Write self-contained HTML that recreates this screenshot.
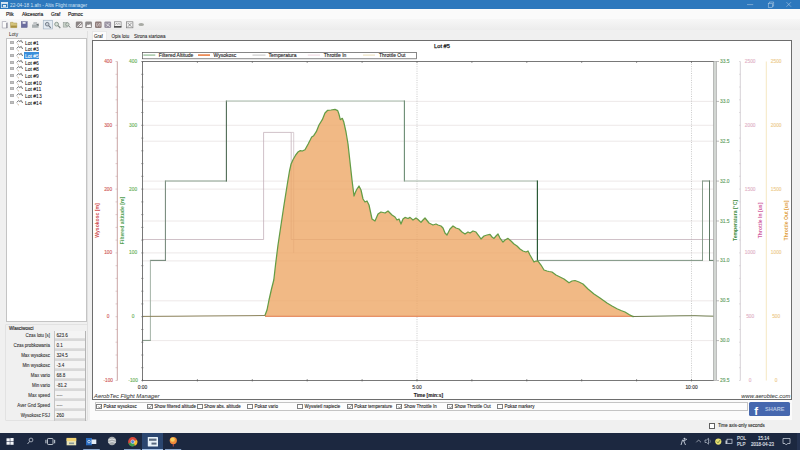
<!DOCTYPE html>
<html><head><meta charset="utf-8"><style>
*{box-sizing:border-box}
html,body{margin:0;padding:0;width:800px;height:450px;overflow:hidden;background:#f0f0f0;font-family:"Liberation Sans",sans-serif;position:relative}
.abs{position:absolute}
.title{position:absolute;left:0;top:0;width:800px;height:9.3px;background:#2d78bd}
.ttext{position:absolute;left:10px;top:2.6px;font-size:4.78px;line-height:5px;color:#d4e4f4;white-space:nowrap}
.menu{position:absolute;left:0;top:9px;width:800px;height:10px;background:#fbfbfb}
.mi{position:absolute;top:12px;font-size:4.8px;line-height:5px;color:#222;white-space:nowrap;-webkit-text-stroke:0.15px #222}
.toolbar{position:absolute;left:0;top:19px;width:800px;height:11px;background:linear-gradient(#f7f7f7,#ececec)}
.tool{position:absolute;top:21.5px;width:6.5px;height:6.5px;border:0.6px solid #888;border-radius:0.8px}
.tree{position:absolute;left:6px;top:38px;width:80.5px;height:283.5px;background:#fff;border:0.6px solid #c4c4c4}
.tsq{position:absolute;left:10px;width:3.6px;height:3px;background:#c0c0c0;border:0.4px solid #b0b0b0}
.ticon{position:absolute;left:16px}
.titem{position:absolute;left:25px;font-size:5px;line-height:6.6px;white-space:nowrap;-webkit-text-stroke:0.05px currentColor}
.tsel{position:absolute;left:24px;width:15.2px;height:7px;background:#3a8fdc}
.grp{position:absolute;left:5px;top:323.5px;width:82.5px;height:97.5px;border:0.5px solid #e2e2e2;border-radius:1px}
.plab{position:absolute;right:750px;font-size:4.45px;line-height:6px;color:#333;white-space:nowrap;text-align:right;-webkit-text-stroke:0.08px #333}
.pbox{position:absolute;left:54px;width:31.6px;height:10px;background:linear-gradient(#f4f4f4 0,#f4f4f4 72%,#d8d8d8 76%,#d8d8d8 100%);border-left:0.6px solid #c4c4c4;border-right:0.7px solid #b4b4b4;font-size:4.6px;line-height:10px;padding-left:1.4px;color:#222;white-space:nowrap;-webkit-text-stroke:0.06px #222}
.tabs{position:absolute;left:91.5px;top:31px;width:15px;height:9.5px;background:#fcfcfc;border:0.5px solid #e8e8e8;border-bottom:none}
.tab{position:absolute;top:34px;font-size:4.5px;line-height:5px;color:#222;white-space:nowrap;-webkit-text-stroke:0.06px #222}
.chkrow{position:absolute;left:95px;top:402.3px;width:653px;height:8.3px;background:#fdfdfd;border:0.6px solid #c4c4c4}
.cb{position:absolute;width:6px;height:5.3px;border:0.5px solid #808080;background:#fff}
.cbl{position:absolute;font-size:4.5px;line-height:6px;color:#222;white-space:nowrap;-webkit-text-stroke:0.08px #222}
.fb{position:absolute;left:749px;top:402.3px;width:41.3px;height:14px;background:#4567ae;border-radius:1.6px}
.task{position:absolute;left:0;top:433px;width:800px;height:17px;background:#1c2840}
.tray{position:absolute;font-size:4.5px;line-height:5px;color:#e4e8f0;white-space:nowrap;-webkit-text-stroke:0.1px #e4e8f0}
</style></head><body>
<div class="title"></div>
<svg class="abs" style="left:1px;top:1.5px" width="7" height="6" viewBox="0 0 7 6"><rect x="0.3" y="0.3" width="6.4" height="5.4" fill="none" stroke="#e8f0f8" stroke-width="0.7"/><rect x="0.3" y="0.3" width="6.4" height="1.6" fill="#e8f0f8"/><rect x="2" y="3" width="3" height="1.8" fill="#e8f0f8"/></svg>
<div class="ttext">22-04-18 1.afn - Altis Flight manager</div>
<svg class="abs" style="left:740px;top:0" width="60" height="9" viewBox="740 0 60 9"><path d="M747 4.6 L753.2 4.6" stroke="#d4e2f0" stroke-width="0.45"/><rect x="768.2" y="3.2" width="4.2" height="4.2" fill="none" stroke="#d4e2f0" stroke-width="0.45"/><path d="M769.4 3.2 L769.4 2 L773.6 2 L773.6 6.2 L772.4 6.2" fill="none" stroke="#d4e2f0" stroke-width="0.45"/><path d="M786.5 2.2 L791 6.7 M791 2.2 L786.5 6.7" stroke="#d4e2f0" stroke-width="0.45"/></svg>


<div class="menu"></div>
<div class="mi" style="left:6px">Plik</div>
<div class="mi" style="left:22px">Akcesoria</div>
<div class="mi" style="left:51px">Graf</div>
<div class="mi" style="left:68px">Pomoc</div>
<div class="toolbar"></div>
<svg class="abs" style="left:0;top:18px" width="150" height="13" viewBox="0 18 150 13">
<path d="M2.3 21.5 L6 21.5 L7.2 22.7 L7.2 28 L2.3 28 Z" fill="#fafafa" stroke="#9a9aa8" stroke-width="0.6"/><path d="M6.8 23 L6.8 28" stroke="#6a6a78" stroke-width="0.8"/>
<path d="M10.5 22.3 L13 22.3 L13.6 23 L16.8 23 L16.8 27.6 L10.5 27.6 Z" fill="#d4c47c" stroke="#a89448" stroke-width="0.5"/><rect x="11" y="25.6" width="5.8" height="2" fill="#a89040"/>
<rect x="21.2" y="21.6" width="6" height="6" fill="#6a6c9e" stroke="#5a5c8a" stroke-width="0.4"/><rect x="22.6" y="22" width="3" height="1.8" fill="#e8e8f0"/>
<path d="M32 24.5 L38.6 24.5 L38.6 27.8 L32 27.8 Z" fill="#aab0b2"/><path d="M33.5 22 L37 22 L37.5 24.5 L33 24.5 Z" fill="#c0c4c6"/><path d="M36 24.5 L38.6 23.6 L38.6 26" fill="#6a7274"/>
<rect x="43.3" y="20.3" width="9.2" height="8.6" fill="#e4ebf2" stroke="#a4b4c4" stroke-width="0.7"/>
<circle cx="47.2" cy="24.2" r="1.8" fill="#c8d0d8" stroke="#606a78" stroke-width="0.8"/><path d="M48.5 25.5 L50.8 27.8" stroke="#707880" stroke-width="1.1"/>
<circle cx="56.6" cy="24.2" r="1.9" fill="#d8e0d8" stroke="#7a8a80" stroke-width="0.8"/><path d="M58 25.6 L60.3 28" stroke="#7a8480" stroke-width="1.1"/>
<rect x="63.2" y="22.5" width="4" height="4.6" fill="#c8d0c8" stroke="#8a9490" stroke-width="0.5"/><circle cx="67.4" cy="24.4" r="1.7" fill="#d0d8d0" stroke="#7a8a80" stroke-width="0.7"/><path d="M68.6 25.6 L70.2 27.6" stroke="#7a8480" stroke-width="1"/>
<rect x="75.8" y="21.6" width="6.8" height="6.3" rx="1.2" fill="#8a8484"/><path d="M77.2 26.6 L81.2 22.8" stroke="#faf6f6" stroke-width="0.9"/><path d="M78.6 27 L81.8 24 L81.8 27 Z" fill="#faf6f6"/>
<rect x="85.2" y="21.6" width="6.8" height="6.3" rx="1.2" fill="#8e8a8a"/><path d="M86.2 27 L87.8 24.2 L89 25.2 L90.2 23.4 L91.2 27 Z" fill="#faf8f8"/>
<rect x="95" y="21.6" width="6.6" height="6.3" rx="1.2" fill="#8e7c7a"/><path d="M97 23 Q96.3 24.8 97 26.6 M99.8 23 Q100.5 24.8 99.8 26.6 M99.4 23.2 L97.6 26.4" stroke="#f4eaea" stroke-width="0.6" fill="none"/>
<rect x="104.3" y="21.6" width="6.8" height="6.3" rx="1.2" fill="#9a94a2"/><path d="M106 23.5 L107.5 25 L109.5 23 M106.5 26.5 L108 25 L110 26.8" stroke="#f4f2f6" stroke-width="0.7" fill="none"/>
<rect x="114.3" y="21.8" width="6.8" height="5.8" fill="#f4f4f4" stroke="#6a6a6a" stroke-width="0.6"/><rect x="114" y="26" width="7.4" height="1.4" fill="#505050"/><path d="M115.5 24.8 L116.6 23.2 L117.8 24.6 L119 23.2 L120 24.8" stroke="#6a6a6a" stroke-width="0.5" fill="none"/>
<rect x="126.4" y="21.8" width="6.5" height="6" fill="#f0f0f0" stroke="#7a7a7a" stroke-width="0.7"/><path d="M127.8 23 L131.5 26.8 M131.5 23 L127.8 26.8" stroke="#5a5a5a" stroke-width="0.6"/>
<ellipse cx="141.2" cy="24.5" rx="2.8" ry="1.6" fill="#a8aaa4"/>
</svg>
<div class="abs" style="left:9px;top:31.5px;font-size:4.8px;line-height:5px;color:#222">Loty</div>
<div class="tree"></div>
<div class="tsq" style="top:40.80px"></div><svg class="ticon" style="top:38.60px" width="8" height="8" viewBox="0 0 8 8"><path d="M0.8 3.4 L2.6 1.6 L3.8 2.6 L5.2 1.4 L6.6 4" fill="none" stroke="#3a3a3a" stroke-width="0.75"/><path d="M1.2 4 Q1.6 5.8 3 6.8" fill="none" stroke="#9a9a9a" stroke-width="0.5" stroke-dasharray="0.8,0.5"/><circle cx="2.4" cy="5.4" r="0.4" fill="#d8a050"/></svg><div class="titem" style="top:39.50px;color:#111">Lot #1</div><div class="tsq" style="top:47.47px"></div><svg class="ticon" style="top:45.27px" width="8" height="8" viewBox="0 0 8 8"><path d="M0.8 3.4 L2.6 1.6 L3.8 2.6 L5.2 1.4 L6.6 4" fill="none" stroke="#3a3a3a" stroke-width="0.75"/><path d="M1.2 4 Q1.6 5.8 3 6.8" fill="none" stroke="#9a9a9a" stroke-width="0.5" stroke-dasharray="0.8,0.5"/><circle cx="2.4" cy="5.4" r="0.4" fill="#d8a050"/></svg><div class="titem" style="top:46.17px;color:#111">Lot #3</div><div class="tsq" style="top:54.13px"></div><svg class="ticon" style="top:51.93px" width="8" height="8" viewBox="0 0 8 8"><path d="M0.8 3.4 L2.6 1.6 L3.8 2.6 L5.2 1.4 L6.6 4" fill="none" stroke="#3a3a3a" stroke-width="0.75"/><path d="M1.2 4 Q1.6 5.8 3 6.8" fill="none" stroke="#9a9a9a" stroke-width="0.5" stroke-dasharray="0.8,0.5"/><circle cx="2.4" cy="5.4" r="0.4" fill="#d8a050"/></svg><div class="tsel" style="top:51.93px"></div><div class="titem" style="top:52.83px;color:#fff">Lot #5</div><div class="tsq" style="top:60.80px"></div><svg class="ticon" style="top:58.60px" width="8" height="8" viewBox="0 0 8 8"><path d="M0.8 3.4 L2.6 1.6 L3.8 2.6 L5.2 1.4 L6.6 4" fill="none" stroke="#3a3a3a" stroke-width="0.75"/><path d="M1.2 4 Q1.6 5.8 3 6.8" fill="none" stroke="#9a9a9a" stroke-width="0.5" stroke-dasharray="0.8,0.5"/><circle cx="2.4" cy="5.4" r="0.4" fill="#d8a050"/></svg><div class="titem" style="top:59.50px;color:#111">Lot #6</div><div class="tsq" style="top:67.47px"></div><svg class="ticon" style="top:65.27px" width="8" height="8" viewBox="0 0 8 8"><path d="M0.8 3.4 L2.6 1.6 L3.8 2.6 L5.2 1.4 L6.6 4" fill="none" stroke="#3a3a3a" stroke-width="0.75"/><path d="M1.2 4 Q1.6 5.8 3 6.8" fill="none" stroke="#9a9a9a" stroke-width="0.5" stroke-dasharray="0.8,0.5"/><circle cx="2.4" cy="5.4" r="0.4" fill="#d8a050"/></svg><div class="titem" style="top:66.17px;color:#111">Lot #8</div><div class="tsq" style="top:74.14px"></div><svg class="ticon" style="top:71.94px" width="8" height="8" viewBox="0 0 8 8"><path d="M0.8 3.4 L2.6 1.6 L3.8 2.6 L5.2 1.4 L6.6 4" fill="none" stroke="#3a3a3a" stroke-width="0.75"/><path d="M1.2 4 Q1.6 5.8 3 6.8" fill="none" stroke="#9a9a9a" stroke-width="0.5" stroke-dasharray="0.8,0.5"/><circle cx="2.4" cy="5.4" r="0.4" fill="#d8a050"/></svg><div class="titem" style="top:72.84px;color:#111">Lot #9</div><div class="tsq" style="top:80.80px"></div><svg class="ticon" style="top:78.60px" width="8" height="8" viewBox="0 0 8 8"><path d="M0.8 3.4 L2.6 1.6 L3.8 2.6 L5.2 1.4 L6.6 4" fill="none" stroke="#3a3a3a" stroke-width="0.75"/><path d="M1.2 4 Q1.6 5.8 3 6.8" fill="none" stroke="#9a9a9a" stroke-width="0.5" stroke-dasharray="0.8,0.5"/><circle cx="2.4" cy="5.4" r="0.4" fill="#d8a050"/></svg><div class="titem" style="top:79.50px;color:#111">Lot #10</div><div class="tsq" style="top:87.47px"></div><svg class="ticon" style="top:85.27px" width="8" height="8" viewBox="0 0 8 8"><path d="M0.8 3.4 L2.6 1.6 L3.8 2.6 L5.2 1.4 L6.6 4" fill="none" stroke="#3a3a3a" stroke-width="0.75"/><path d="M1.2 4 Q1.6 5.8 3 6.8" fill="none" stroke="#9a9a9a" stroke-width="0.5" stroke-dasharray="0.8,0.5"/><circle cx="2.4" cy="5.4" r="0.4" fill="#d8a050"/></svg><div class="titem" style="top:86.17px;color:#111">Lot #11</div><div class="tsq" style="top:94.14px"></div><svg class="ticon" style="top:91.94px" width="8" height="8" viewBox="0 0 8 8"><path d="M0.8 3.4 L2.6 1.6 L3.8 2.6 L5.2 1.4 L6.6 4" fill="none" stroke="#3a3a3a" stroke-width="0.75"/><path d="M1.2 4 Q1.6 5.8 3 6.8" fill="none" stroke="#9a9a9a" stroke-width="0.5" stroke-dasharray="0.8,0.5"/><circle cx="2.4" cy="5.4" r="0.4" fill="#d8a050"/></svg><div class="titem" style="top:92.84px;color:#111">Lot #13</div><div class="tsq" style="top:100.80px"></div><svg class="ticon" style="top:98.60px" width="8" height="8" viewBox="0 0 8 8"><path d="M0.8 3.4 L2.6 1.6 L3.8 2.6 L5.2 1.4 L6.6 4" fill="none" stroke="#3a3a3a" stroke-width="0.75"/><path d="M1.2 4 Q1.6 5.8 3 6.8" fill="none" stroke="#9a9a9a" stroke-width="0.5" stroke-dasharray="0.8,0.5"/><circle cx="2.4" cy="5.4" r="0.4" fill="#d8a050"/></svg><div class="titem" style="top:99.50px;color:#111">Lot #14</div>
<div class="grp"></div>
<div class="abs" style="left:9px;top:325.6px;font-size:4.5px;line-height:5px;color:#222;-webkit-text-stroke:0.12px #222">Wlasciwosci</div>
<div class="plab" style="top:332.6px">Czas lotu [s]</div><div class="pbox" style="top:330.5px">623.6</div><div class="plab" style="top:342.6px">Czas probkowania</div><div class="pbox" style="top:340.5px">0.1</div><div class="plab" style="top:352.6px">Max wysokosc</div><div class="pbox" style="top:350.5px">324.5</div><div class="plab" style="top:362.6px">Min wysokosc</div><div class="pbox" style="top:360.5px">-3.4</div><div class="plab" style="top:372.6px">Max vario</div><div class="pbox" style="top:370.5px">68.8</div><div class="plab" style="top:382.6px">Min vario</div><div class="pbox" style="top:380.5px">-81.2</div><div class="plab" style="top:392.6px">Max speed</div><div class="pbox" style="top:390.5px">----</div><div class="plab" style="top:402.6px">Aver Gnd Speed</div><div class="pbox" style="top:400.5px">----</div><div class="plab" style="top:412.6px">Wysokosc FSJ</div><div class="pbox" style="top:410.5px">260</div>
<div class="abs" style="left:87px;top:31px;width:1px;height:370px;background:#e0e0e0"></div>
<div class="tabs"></div>
<div class="tab" style="left:94px;top:33.6px">Graf</div>
<div class="tab" style="left:111.5px">Opis lotu</div>
<div class="tab" style="left:134px">Strona startowa</div>
<svg width="800" height="450" viewBox="0 0 800 450" style="position:absolute;left:0;top:0" font-family="Liberation Sans, sans-serif"><rect x="92.5" y="40.5" width="699" height="359" fill="#fff" stroke="#6d6d6d" stroke-width="1"/><line x1="142.5" y1="125.3" x2="714.0" y2="125.3" stroke="#e8e2e2" stroke-width="0.8"/><line x1="142.5" y1="189.1" x2="714.0" y2="189.1" stroke="#e8e2e2" stroke-width="0.8"/><line x1="142.5" y1="252.9" x2="714.0" y2="252.9" stroke="#e8e2e2" stroke-width="0.8"/><line x1="142.5" y1="101.4" x2="714.0" y2="101.4" stroke="#e8e2e2" stroke-width="0.8"/><line x1="142.5" y1="141.2" x2="714.0" y2="141.2" stroke="#e8e2e2" stroke-width="0.8"/><line x1="142.5" y1="181.1" x2="714.0" y2="181.1" stroke="#e8e2e2" stroke-width="0.8"/><line x1="142.5" y1="221.0" x2="714.0" y2="221.0" stroke="#e8e2e2" stroke-width="0.8"/><line x1="142.5" y1="260.9" x2="714.0" y2="260.9" stroke="#e8e2e2" stroke-width="0.8"/><line x1="142.5" y1="300.8" x2="714.0" y2="300.8" stroke="#e8e2e2" stroke-width="0.8"/><line x1="142.5" y1="340.6" x2="714.0" y2="340.6" stroke="#e8e2e2" stroke-width="0.8"/><line x1="417.0" y1="61.5" x2="417.0" y2="380.5" stroke="#a8a8a8" stroke-width="0.6" stroke-dasharray="1,1.3"/><line x1="691.5" y1="61.5" x2="691.5" y2="380.5" stroke="#a8a8a8" stroke-width="0.6" stroke-dasharray="1,1.3"/><polyline points="142.5,239.5 263.6,239.5 263.6,132.4 291.2,132.4 291.2,239.5 714,239.5" fill="none" stroke="#c0acb6" stroke-width="0.75"/><polyline points="291.2,132.4 293.7,132.4 293.7,253" fill="none" stroke="#c8b8c0" stroke-width="0.7"/><line x1="142.5" y1="340.4" x2="150.9" y2="340.4" stroke="#7e9482" stroke-width="1.0"/><line x1="150.4" y1="340.9" x2="150.4" y2="259.9" stroke="#98aa9c" stroke-width="0.9"/><line x1="150.4" y1="260.4" x2="165.9" y2="260.4" stroke="#74887a" stroke-width="1.1"/><line x1="165.4" y1="260.9" x2="165.4" y2="180.5" stroke="#6e8274" stroke-width="1.0"/><line x1="165.4" y1="181" x2="226.9" y2="181" stroke="#8aa290" stroke-width="1.1"/><line x1="226.4" y1="181.5" x2="226.4" y2="100.5" stroke="#4e6a54" stroke-width="1.1"/><line x1="226.4" y1="101" x2="404.9" y2="101" stroke="#a8bcac" stroke-width="1.2"/><line x1="404.4" y1="100.5" x2="404.4" y2="181.5" stroke="#6a8c72" stroke-width="1.1"/><line x1="404.4" y1="181" x2="537.9" y2="181" stroke="#a8bcac" stroke-width="1.2"/><line x1="537.4" y1="180.5" x2="537.4" y2="260.9" stroke="#2a5a36" stroke-width="1.2"/><line x1="537.4" y1="260.4" x2="703" y2="260.4" stroke="#7e9482" stroke-width="1.0"/><line x1="702.5" y1="260.9" x2="702.5" y2="180.5" stroke="#7e9482" stroke-width="0.9"/><line x1="702.5" y1="181" x2="710" y2="181" stroke="#7e9482" stroke-width="1.0"/><line x1="709.5" y1="180.5" x2="709.5" y2="260.9" stroke="#5e7a64" stroke-width="1.0"/><line x1="709.5" y1="260.4" x2="714" y2="260.4" stroke="#5e7a64" stroke-width="1.0"/><polygon points="265,316.3 265.0,315.2 267.0,310.0 269.0,300.0 271.5,289.0 273.8,280.0 275.5,265.0 278.0,245.0 281.0,225.0 284.0,205.0 287.5,183.0 289.5,171.0 291.0,164.3 293.0,159.7 295.7,155.0 298.3,151.7 300.3,150.6 302.3,151.0 305.0,149.7 308.3,143.7 311.7,137.0 313.7,135.7 316.3,131.7 319.0,125.0 322.3,119.7 325.0,113.0 327.7,110.3 331.0,110.0 335.0,109.4 337.7,110.6 339.0,114.3 340.3,119.7 342.3,118.3 343.7,121.7 346.0,132.0 348.0,144.0 350.0,162.0 352.0,180.0 354.0,196.0 355.5,192.0 357.0,189.0 359.0,186.0 361.0,190.0 363.0,199.0 365.0,202.0 367.0,201.0 369.0,205.0 372.0,219.0 375.0,221.0 378.0,214.0 381.0,212.0 385.0,213.0 388.0,211.0 392.0,215.0 395.0,217.0 397.0,220.0 399.0,219.0 401.0,224.0 403.0,219.0 405.0,217.4 408.0,218.5 410.0,217.4 413.0,220.0 416.0,218.0 418.0,219.5 421.0,222.4 423.0,220.0 425.0,218.0 429.0,223.0 433.0,225.0 436.0,224.0 438.0,225.0 441.0,226.0 443.0,228.0 445.0,233.0 447.0,235.0 450.0,229.0 453.0,226.0 456.0,228.0 459.0,229.0 462.0,232.0 465.0,234.0 468.0,232.0 470.0,233.0 473.0,231.0 476.0,232.0 479.0,236.0 481.0,239.0 484.0,236.0 487.0,235.0 490.0,234.4 492.0,237.0 494.0,238.4 496.0,236.0 498.0,234.0 500.0,238.0 503.0,242.0 505.0,240.0 508.0,238.4 511.0,241.0 514.0,244.0 517.0,246.0 520.0,249.0 523.0,251.0 526.0,252.0 528.0,251.0 530.0,255.0 534.0,262.0 536.0,261.0 538.0,261.0 541.0,265.0 544.0,270.0 547.0,271.0 549.0,271.5 552.0,272.0 556.0,275.0 560.0,277.0 564.0,279.0 569.0,282.8 572.0,281.0 575.0,280.5 579.0,282.0 583.0,284.0 588.0,289.0 594.0,294.0 600.0,298.0 607.0,303.0 612.0,306.0 617.0,308.7 621.0,310.5 625.0,312.0 629.0,314.5 633.0,316.6 634.0,316.4 633,316.3" fill="#eea866" fill-opacity="0.8"/><line x1="265" y1="316.3" x2="633" y2="316.3" stroke="#e27a4a" stroke-width="1"/><polyline points="265.0,315.2 267.0,310.0 269.0,300.0 271.5,289.0 273.8,280.0 275.5,265.0 278.0,245.0 281.0,225.0 284.0,205.0 287.5,183.0 289.5,171.0 291.0,164.3 293.0,159.7 295.7,155.0 298.3,151.7 300.3,150.6 302.3,151.0 305.0,149.7 308.3,143.7 311.7,137.0 313.7,135.7 316.3,131.7 319.0,125.0 322.3,119.7 325.0,113.0 327.7,110.3 331.0,110.0 335.0,109.4 337.7,110.6 339.0,114.3 340.3,119.7 342.3,118.3 343.7,121.7 346.0,132.0 348.0,144.0 350.0,162.0 352.0,180.0 354.0,196.0 355.5,192.0 357.0,189.0 359.0,186.0 361.0,190.0 363.0,199.0 365.0,202.0 367.0,201.0 369.0,205.0 372.0,219.0 375.0,221.0 378.0,214.0 381.0,212.0 385.0,213.0 388.0,211.0 392.0,215.0 395.0,217.0 397.0,220.0 399.0,219.0 401.0,224.0 403.0,219.0 405.0,217.4 408.0,218.5 410.0,217.4 413.0,220.0 416.0,218.0 418.0,219.5 421.0,222.4 423.0,220.0 425.0,218.0 429.0,223.0 433.0,225.0 436.0,224.0 438.0,225.0 441.0,226.0 443.0,228.0 445.0,233.0 447.0,235.0 450.0,229.0 453.0,226.0 456.0,228.0 459.0,229.0 462.0,232.0 465.0,234.0 468.0,232.0 470.0,233.0 473.0,231.0 476.0,232.0 479.0,236.0 481.0,239.0 484.0,236.0 487.0,235.0 490.0,234.4 492.0,237.0 494.0,238.4 496.0,236.0 498.0,234.0 500.0,238.0 503.0,242.0 505.0,240.0 508.0,238.4 511.0,241.0 514.0,244.0 517.0,246.0 520.0,249.0 523.0,251.0 526.0,252.0 528.0,251.0 530.0,255.0 534.0,262.0 536.0,261.0 538.0,261.0 541.0,265.0 544.0,270.0 547.0,271.0 549.0,271.5 552.0,272.0 556.0,275.0 560.0,277.0 564.0,279.0 569.0,282.8 572.0,281.0 575.0,280.5 579.0,282.0 583.0,284.0 588.0,289.0 594.0,294.0 600.0,298.0 607.0,303.0 612.0,306.0 617.0,308.7 621.0,310.5 625.0,312.0 629.0,314.5 633.0,316.6 634.0,316.4" fill="none" stroke="#649c45" stroke-width="1.25" stroke-linejoin="round"/><polyline points="142.5,316.4 180,316.2 200,316 230,315.8 250,315.7 265.5,315.5" fill="none" stroke="#8a8058" stroke-width="1"/><polyline points="633,316.5 660,316.1 680,315.8 695,315.7 705,316.0 714,316.2" fill="none" stroke="#6e7a4c" stroke-width="1"/><line x1="142.5" y1="61.5" x2="714.0" y2="61.5" stroke="#555" stroke-width="0.8"/><line x1="142.5" y1="380.5" x2="714.0" y2="380.5" stroke="#555" stroke-width="0.8"/><line x1="142.5" y1="61.5" x2="142.5" y2="380.5" stroke="#555" stroke-width="0.8"/><rect x="713.3" y="61.5" width="3.2" height="319.0" fill="#d2d6d2" stroke="#8a8a8a" stroke-width="0.45"/><line x1="141.0" y1="380.5" x2="143.5" y2="380.5" stroke="#666" stroke-width="0.5"/><line x1="141.0" y1="367.7" x2="143.5" y2="367.7" stroke="#666" stroke-width="0.5"/><line x1="141.0" y1="355.0" x2="143.5" y2="355.0" stroke="#666" stroke-width="0.5"/><line x1="141.0" y1="342.2" x2="143.5" y2="342.2" stroke="#666" stroke-width="0.5"/><line x1="141.0" y1="329.5" x2="143.5" y2="329.5" stroke="#666" stroke-width="0.5"/><line x1="141.0" y1="316.7" x2="143.5" y2="316.7" stroke="#666" stroke-width="0.5"/><line x1="141.0" y1="303.9" x2="143.5" y2="303.9" stroke="#666" stroke-width="0.5"/><line x1="141.0" y1="291.2" x2="143.5" y2="291.2" stroke="#666" stroke-width="0.5"/><line x1="141.0" y1="278.4" x2="143.5" y2="278.4" stroke="#666" stroke-width="0.5"/><line x1="141.0" y1="265.7" x2="143.5" y2="265.7" stroke="#666" stroke-width="0.5"/><line x1="141.0" y1="252.9" x2="143.5" y2="252.9" stroke="#666" stroke-width="0.5"/><line x1="141.0" y1="240.1" x2="143.5" y2="240.1" stroke="#666" stroke-width="0.5"/><line x1="141.0" y1="227.4" x2="143.5" y2="227.4" stroke="#666" stroke-width="0.5"/><line x1="141.0" y1="214.6" x2="143.5" y2="214.6" stroke="#666" stroke-width="0.5"/><line x1="141.0" y1="201.9" x2="143.5" y2="201.9" stroke="#666" stroke-width="0.5"/><line x1="141.0" y1="189.1" x2="143.5" y2="189.1" stroke="#666" stroke-width="0.5"/><line x1="141.0" y1="176.3" x2="143.5" y2="176.3" stroke="#666" stroke-width="0.5"/><line x1="141.0" y1="163.6" x2="143.5" y2="163.6" stroke="#666" stroke-width="0.5"/><line x1="141.0" y1="150.8" x2="143.5" y2="150.8" stroke="#666" stroke-width="0.5"/><line x1="141.0" y1="138.1" x2="143.5" y2="138.1" stroke="#666" stroke-width="0.5"/><line x1="141.0" y1="125.3" x2="143.5" y2="125.3" stroke="#666" stroke-width="0.5"/><line x1="141.0" y1="112.5" x2="143.5" y2="112.5" stroke="#666" stroke-width="0.5"/><line x1="141.0" y1="99.8" x2="143.5" y2="99.8" stroke="#666" stroke-width="0.5"/><line x1="141.0" y1="87.0" x2="143.5" y2="87.0" stroke="#666" stroke-width="0.5"/><line x1="141.0" y1="74.3" x2="143.5" y2="74.3" stroke="#666" stroke-width="0.5"/><line x1="141.0" y1="61.5" x2="143.5" y2="61.5" stroke="#666" stroke-width="0.5"/><line x1="117.3" y1="61.5" x2="117.3" y2="380.5" stroke="#c49a9a" stroke-width="0.9"/><line x1="115.5" y1="380.5" x2="117.3" y2="380.5" stroke="#c49a9a" stroke-width="0.5"/><line x1="115.5" y1="367.7" x2="117.3" y2="367.7" stroke="#c49a9a" stroke-width="0.5"/><line x1="115.5" y1="355.0" x2="117.3" y2="355.0" stroke="#c49a9a" stroke-width="0.5"/><line x1="115.5" y1="342.2" x2="117.3" y2="342.2" stroke="#c49a9a" stroke-width="0.5"/><line x1="115.5" y1="329.5" x2="117.3" y2="329.5" stroke="#c49a9a" stroke-width="0.5"/><line x1="115.5" y1="316.7" x2="117.3" y2="316.7" stroke="#c49a9a" stroke-width="0.5"/><line x1="115.5" y1="303.9" x2="117.3" y2="303.9" stroke="#c49a9a" stroke-width="0.5"/><line x1="115.5" y1="291.2" x2="117.3" y2="291.2" stroke="#c49a9a" stroke-width="0.5"/><line x1="115.5" y1="278.4" x2="117.3" y2="278.4" stroke="#c49a9a" stroke-width="0.5"/><line x1="115.5" y1="265.7" x2="117.3" y2="265.7" stroke="#c49a9a" stroke-width="0.5"/><line x1="115.5" y1="252.9" x2="117.3" y2="252.9" stroke="#c49a9a" stroke-width="0.5"/><line x1="115.5" y1="240.1" x2="117.3" y2="240.1" stroke="#c49a9a" stroke-width="0.5"/><line x1="115.5" y1="227.4" x2="117.3" y2="227.4" stroke="#c49a9a" stroke-width="0.5"/><line x1="115.5" y1="214.6" x2="117.3" y2="214.6" stroke="#c49a9a" stroke-width="0.5"/><line x1="115.5" y1="201.9" x2="117.3" y2="201.9" stroke="#c49a9a" stroke-width="0.5"/><line x1="115.5" y1="189.1" x2="117.3" y2="189.1" stroke="#c49a9a" stroke-width="0.5"/><line x1="115.5" y1="176.3" x2="117.3" y2="176.3" stroke="#c49a9a" stroke-width="0.5"/><line x1="115.5" y1="163.6" x2="117.3" y2="163.6" stroke="#c49a9a" stroke-width="0.5"/><line x1="115.5" y1="150.8" x2="117.3" y2="150.8" stroke="#c49a9a" stroke-width="0.5"/><line x1="115.5" y1="138.1" x2="117.3" y2="138.1" stroke="#c49a9a" stroke-width="0.5"/><line x1="115.5" y1="125.3" x2="117.3" y2="125.3" stroke="#c49a9a" stroke-width="0.5"/><line x1="115.5" y1="112.5" x2="117.3" y2="112.5" stroke="#c49a9a" stroke-width="0.5"/><line x1="115.5" y1="99.8" x2="117.3" y2="99.8" stroke="#c49a9a" stroke-width="0.5"/><line x1="115.5" y1="87.0" x2="117.3" y2="87.0" stroke="#c49a9a" stroke-width="0.5"/><line x1="115.5" y1="74.3" x2="117.3" y2="74.3" stroke="#c49a9a" stroke-width="0.5"/><line x1="115.5" y1="61.5" x2="117.3" y2="61.5" stroke="#c49a9a" stroke-width="0.5"/><line x1="142.5" y1="61.5" x2="142.5" y2="63.0" stroke="#555" stroke-width="0.6"/><line x1="142.5" y1="379.0" x2="142.5" y2="381.5" stroke="#555" stroke-width="0.6"/><line x1="197.4" y1="61.5" x2="197.4" y2="63.0" stroke="#555" stroke-width="0.6"/><line x1="197.4" y1="379.0" x2="197.4" y2="381.5" stroke="#555" stroke-width="0.6"/><line x1="252.3" y1="61.5" x2="252.3" y2="63.0" stroke="#555" stroke-width="0.6"/><line x1="252.3" y1="379.0" x2="252.3" y2="381.5" stroke="#555" stroke-width="0.6"/><line x1="307.2" y1="61.5" x2="307.2" y2="63.0" stroke="#555" stroke-width="0.6"/><line x1="307.2" y1="379.0" x2="307.2" y2="381.5" stroke="#555" stroke-width="0.6"/><line x1="362.1" y1="61.5" x2="362.1" y2="63.0" stroke="#555" stroke-width="0.6"/><line x1="362.1" y1="379.0" x2="362.1" y2="381.5" stroke="#555" stroke-width="0.6"/><line x1="417.0" y1="61.5" x2="417.0" y2="63.0" stroke="#555" stroke-width="0.6"/><line x1="417.0" y1="379.0" x2="417.0" y2="381.5" stroke="#555" stroke-width="0.6"/><line x1="471.9" y1="61.5" x2="471.9" y2="63.0" stroke="#555" stroke-width="0.6"/><line x1="471.9" y1="379.0" x2="471.9" y2="381.5" stroke="#555" stroke-width="0.6"/><line x1="526.8" y1="61.5" x2="526.8" y2="63.0" stroke="#555" stroke-width="0.6"/><line x1="526.8" y1="379.0" x2="526.8" y2="381.5" stroke="#555" stroke-width="0.6"/><line x1="581.7" y1="61.5" x2="581.7" y2="63.0" stroke="#555" stroke-width="0.6"/><line x1="581.7" y1="379.0" x2="581.7" y2="381.5" stroke="#555" stroke-width="0.6"/><line x1="636.6" y1="61.5" x2="636.6" y2="63.0" stroke="#555" stroke-width="0.6"/><line x1="636.6" y1="379.0" x2="636.6" y2="381.5" stroke="#555" stroke-width="0.6"/><line x1="691.5" y1="61.5" x2="691.5" y2="63.0" stroke="#555" stroke-width="0.6"/><line x1="691.5" y1="379.0" x2="691.5" y2="381.5" stroke="#555" stroke-width="0.6"/><line x1="740.3" y1="61.5" x2="740.3" y2="380.5" stroke="#b8b0b8" stroke-width="0.6"/><line x1="766.3" y1="61.5" x2="766.3" y2="380.5" stroke="#f0dca8" stroke-width="0.7"/><line x1="739" y1="380.5" x2="740.3" y2="380.5" stroke="#b8b0b8" stroke-width="0.4"/><line x1="739" y1="367.7" x2="740.3" y2="367.7" stroke="#b8b0b8" stroke-width="0.4"/><line x1="739" y1="355.0" x2="740.3" y2="355.0" stroke="#b8b0b8" stroke-width="0.4"/><line x1="739" y1="342.2" x2="740.3" y2="342.2" stroke="#b8b0b8" stroke-width="0.4"/><line x1="739" y1="329.5" x2="740.3" y2="329.5" stroke="#b8b0b8" stroke-width="0.4"/><line x1="739" y1="316.7" x2="740.3" y2="316.7" stroke="#b8b0b8" stroke-width="0.4"/><line x1="739" y1="303.9" x2="740.3" y2="303.9" stroke="#b8b0b8" stroke-width="0.4"/><line x1="739" y1="291.2" x2="740.3" y2="291.2" stroke="#b8b0b8" stroke-width="0.4"/><line x1="739" y1="278.4" x2="740.3" y2="278.4" stroke="#b8b0b8" stroke-width="0.4"/><line x1="739" y1="265.7" x2="740.3" y2="265.7" stroke="#b8b0b8" stroke-width="0.4"/><line x1="739" y1="252.9" x2="740.3" y2="252.9" stroke="#b8b0b8" stroke-width="0.4"/><line x1="739" y1="240.1" x2="740.3" y2="240.1" stroke="#b8b0b8" stroke-width="0.4"/><line x1="739" y1="227.4" x2="740.3" y2="227.4" stroke="#b8b0b8" stroke-width="0.4"/><line x1="739" y1="214.6" x2="740.3" y2="214.6" stroke="#b8b0b8" stroke-width="0.4"/><line x1="739" y1="201.9" x2="740.3" y2="201.9" stroke="#b8b0b8" stroke-width="0.4"/><line x1="739" y1="189.1" x2="740.3" y2="189.1" stroke="#b8b0b8" stroke-width="0.4"/><line x1="739" y1="176.3" x2="740.3" y2="176.3" stroke="#b8b0b8" stroke-width="0.4"/><line x1="739" y1="163.6" x2="740.3" y2="163.6" stroke="#b8b0b8" stroke-width="0.4"/><line x1="739" y1="150.8" x2="740.3" y2="150.8" stroke="#b8b0b8" stroke-width="0.4"/><line x1="739" y1="138.1" x2="740.3" y2="138.1" stroke="#b8b0b8" stroke-width="0.4"/><line x1="739" y1="125.3" x2="740.3" y2="125.3" stroke="#b8b0b8" stroke-width="0.4"/><line x1="739" y1="112.5" x2="740.3" y2="112.5" stroke="#b8b0b8" stroke-width="0.4"/><line x1="739" y1="99.8" x2="740.3" y2="99.8" stroke="#b8b0b8" stroke-width="0.4"/><line x1="739" y1="87.0" x2="740.3" y2="87.0" stroke="#b8b0b8" stroke-width="0.4"/><line x1="739" y1="74.3" x2="740.3" y2="74.3" stroke="#b8b0b8" stroke-width="0.4"/><line x1="739" y1="61.5" x2="740.3" y2="61.5" stroke="#b8b0b8" stroke-width="0.4"/><line x1="716.5" y1="380.5" x2="719" y2="380.5" stroke="#777" stroke-width="0.5"/><line x1="716.5" y1="340.6" x2="719" y2="340.6" stroke="#777" stroke-width="0.5"/><line x1="716.5" y1="300.8" x2="719" y2="300.8" stroke="#777" stroke-width="0.5"/><line x1="716.5" y1="260.9" x2="719" y2="260.9" stroke="#777" stroke-width="0.5"/><line x1="716.5" y1="221.0" x2="719" y2="221.0" stroke="#777" stroke-width="0.5"/><line x1="716.5" y1="181.1" x2="719" y2="181.1" stroke="#777" stroke-width="0.5"/><line x1="716.5" y1="141.2" x2="719" y2="141.2" stroke="#777" stroke-width="0.5"/><line x1="716.5" y1="101.4" x2="719" y2="101.4" stroke="#777" stroke-width="0.5"/><line x1="716.5" y1="61.5" x2="719" y2="61.5" stroke="#777" stroke-width="0.5"/><rect x="142.5" y="52.5" width="274" height="6.3" fill="#fff" stroke="#555" stroke-width="0.7"/><line x1="143.3" y1="55.1" x2="155.3" y2="55.1" stroke="#a4c8a8" stroke-width="1.5"/><line x1="198" y1="55.1" x2="210" y2="55.1" stroke="#ec8c58" stroke-width="1.8"/><line x1="252.5" y1="55.1" x2="265.5" y2="55.1" stroke="#999" stroke-width="0.6"/><line x1="307.8" y1="55.1" x2="320" y2="55.1" stroke="#e0b8c8" stroke-width="0.6"/><line x1="363" y1="55.1" x2="375" y2="55.1" stroke="#e0d098" stroke-width="0.7"/><text x="108.2" y="63.0" fill="#d05a5a" stroke="#d05a5a" stroke-width="0.12" font-size="4.8" text-anchor="middle" >400</text><text x="133.1" y="63.0" fill="#68b058" stroke="#68b058" stroke-width="0.12" font-size="4.8" text-anchor="middle" >400</text><text x="108.2" y="126.8" fill="#d05a5a" stroke="#d05a5a" stroke-width="0.12" font-size="4.8" text-anchor="middle" >300</text><text x="133.1" y="126.8" fill="#68b058" stroke="#68b058" stroke-width="0.12" font-size="4.8" text-anchor="middle" >300</text><text x="108.2" y="190.6" fill="#d05a5a" stroke="#d05a5a" stroke-width="0.12" font-size="4.8" text-anchor="middle" >200</text><text x="133.1" y="190.6" fill="#68b058" stroke="#68b058" stroke-width="0.12" font-size="4.8" text-anchor="middle" >200</text><text x="108.2" y="254.4" fill="#d05a5a" stroke="#d05a5a" stroke-width="0.12" font-size="4.8" text-anchor="middle" >100</text><text x="133.1" y="254.4" fill="#68b058" stroke="#68b058" stroke-width="0.12" font-size="4.8" text-anchor="middle" >100</text><text x="108.2" y="318.2" fill="#d05a5a" stroke="#d05a5a" stroke-width="0.12" font-size="4.8" text-anchor="middle" >0</text><text x="133.1" y="318.2" fill="#68b058" stroke="#68b058" stroke-width="0.12" font-size="4.8" text-anchor="middle" >0</text><text x="108.2" y="382.0" fill="#d05a5a" stroke="#d05a5a" stroke-width="0.12" font-size="4.8" text-anchor="middle" >-100</text><text x="133.1" y="382.0" fill="#68b058" stroke="#68b058" stroke-width="0.12" font-size="4.8" text-anchor="middle" >-100</text><text x="720" y="63.0" fill="#60a060" stroke="#60a060" stroke-width="0.12" font-size="4.9" text-anchor="start" >33.5</text><text x="720" y="102.9" fill="#60a060" stroke="#60a060" stroke-width="0.12" font-size="4.9" text-anchor="start" >33.0</text><text x="720" y="142.8" fill="#60a060" stroke="#60a060" stroke-width="0.12" font-size="4.9" text-anchor="start" >32.5</text><text x="720" y="182.6" fill="#60a060" stroke="#60a060" stroke-width="0.12" font-size="4.9" text-anchor="start" >32.0</text><text x="720" y="222.5" fill="#60a060" stroke="#60a060" stroke-width="0.12" font-size="4.9" text-anchor="start" >31.5</text><text x="720" y="262.4" fill="#60a060" stroke="#60a060" stroke-width="0.12" font-size="4.9" text-anchor="start" >31.0</text><text x="720" y="302.2" fill="#60a060" stroke="#60a060" stroke-width="0.12" font-size="4.9" text-anchor="start" >30.5</text><text x="720" y="342.1" fill="#60a060" stroke="#60a060" stroke-width="0.12" font-size="4.9" text-anchor="start" >30.0</text><text x="720" y="382.0" fill="#60a060" stroke="#60a060" stroke-width="0.12" font-size="4.9" text-anchor="start" >29.5</text><text x="750.2" y="63.0" fill="#e2b2c6" stroke="#e2b2c6" stroke-width="0.12" font-size="4.8" text-anchor="middle" >2500</text><text x="776.2" y="63.0" fill="#eecb8c" stroke="#eecb8c" stroke-width="0.12" font-size="4.8" text-anchor="middle" >2500</text><text x="750.2" y="126.8" fill="#e2b2c6" stroke="#e2b2c6" stroke-width="0.12" font-size="4.8" text-anchor="middle" >2000</text><text x="776.2" y="126.8" fill="#eecb8c" stroke="#eecb8c" stroke-width="0.12" font-size="4.8" text-anchor="middle" >2000</text><text x="750.2" y="190.6" fill="#e2b2c6" stroke="#e2b2c6" stroke-width="0.12" font-size="4.8" text-anchor="middle" >1500</text><text x="776.2" y="190.6" fill="#eecb8c" stroke="#eecb8c" stroke-width="0.12" font-size="4.8" text-anchor="middle" >1500</text><text x="750.2" y="254.4" fill="#e2b2c6" stroke="#e2b2c6" stroke-width="0.12" font-size="4.8" text-anchor="middle" >1000</text><text x="776.2" y="254.4" fill="#eecb8c" stroke="#eecb8c" stroke-width="0.12" font-size="4.8" text-anchor="middle" >1000</text><text x="750.2" y="318.2" fill="#e2b2c6" stroke="#e2b2c6" stroke-width="0.12" font-size="4.8" text-anchor="middle" >500</text><text x="776.2" y="318.2" fill="#eecb8c" stroke="#eecb8c" stroke-width="0.12" font-size="4.8" text-anchor="middle" >500</text><text x="750.2" y="382.0" fill="#e2b2c6" stroke="#e2b2c6" stroke-width="0.12" font-size="4.8" text-anchor="middle" >0</text><text x="776.2" y="382.0" fill="#eecb8c" stroke="#eecb8c" stroke-width="0.12" font-size="4.8" text-anchor="middle" >0</text><text x="142.5" y="389" fill="#333" stroke="#333" stroke-width="0.12" font-size="4.9" text-anchor="middle" >0:00</text><text x="417.0" y="389" fill="#333" stroke="#333" stroke-width="0.12" font-size="4.9" text-anchor="middle" >5:00</text><text x="691.5" y="389" fill="#333" stroke="#333" stroke-width="0.12" font-size="4.9" text-anchor="middle" >10:00</text><text x="413.8" y="396.8" fill="#222" stroke="#222" stroke-width="0.12" font-size="4.95" text-anchor="start" font-weight="bold">Time [min:s]</text><text x="442" y="47.8" fill="#222" stroke="#222" stroke-width="0.25" font-size="5.7" text-anchor="middle" >Lot #5</text><text x="94" y="398.3" fill="#3a3a3a" stroke="#3a3a3a" stroke-width="0.05" font-size="5.85" text-anchor="start" font-style="italic">AerobTec Flight Manager</text><text x="790.3" y="398.3" fill="#3a3a3a" stroke="#3a3a3a" stroke-width="0.05" font-size="5.8" text-anchor="end" font-style="italic">www.aerobtec.com</text><text x="0" y="0" fill="#d05050" font-size="5.1" text-anchor="middle" font-weight="bold" transform="translate(99,220.5) rotate(-90)">Wysokosc [m]</text><text x="0" y="0" fill="#50a050" font-size="5.1" text-anchor="middle" font-weight="bold" transform="translate(124,220.5) rotate(-90)">Filtered altitude [m]</text><text x="0" y="0" fill="#3c8c3c" font-size="5.1" text-anchor="middle" font-weight="bold" transform="translate(736.5,220.5) rotate(-90)">Temperatura [°C]</text><text x="0" y="0" fill="#d060a0" font-size="5.1" text-anchor="middle" font-weight="bold" transform="translate(762,220.5) rotate(-90)">Throttle In [us]</text><text x="0" y="0" fill="#e0a040" font-size="5.1" text-anchor="middle" font-weight="bold" transform="translate(788,220.5) rotate(-90)">Throttle Out [us]</text><text x="158.8" y="57.0" fill="#222" stroke="#222" stroke-width="0.12" font-size="5.0" text-anchor="start" >Filtered Altitude</text><text x="213.5" y="57.0" fill="#222" stroke="#222" stroke-width="0.12" font-size="5.0" text-anchor="start" >Wysokosc</text><text x="268.5" y="57.0" fill="#222" stroke="#222" stroke-width="0.12" font-size="5.0" text-anchor="start" >Temperatura</text><text x="323.8" y="57.0" fill="#222" stroke="#222" stroke-width="0.12" font-size="5.0" text-anchor="start" >Throttle In</text><text x="379" y="57.0" fill="#222" stroke="#222" stroke-width="0.12" font-size="5.0" text-anchor="start" >Throttle Out</text></svg>
<div class="abs" style="left:90px;top:400px;width:702px;height:20.3px;background:#fbfbfb"></div>
<div class="chkrow"></div>
<div class="cb" style="left:96px;top:403.6px"><svg width="6" height="5.3" viewBox="0 0 6 5.3" style="position:absolute;left:-0.5px;top:-0.5px"><path d="M1.2 2.4 L2.5 4.1 L4.8 1" fill="none" stroke="#606060" stroke-width="0.6"/></svg></div><div class="cbl" style="left:103.6px;top:403.6px">Pokaz wysokosc</div><div class="cb" style="left:146.6px;top:403.6px"><svg width="6" height="5.3" viewBox="0 0 6 5.3" style="position:absolute;left:-0.5px;top:-0.5px"><path d="M1.2 2.4 L2.5 4.1 L4.8 1" fill="none" stroke="#606060" stroke-width="0.6"/></svg></div><div class="cbl" style="left:154.2px;top:403.6px">Show filtered altitude</div><div class="cb" style="left:196.5px;top:403.6px"></div><div class="cbl" style="left:204.1px;top:403.6px">Show abs. altitude</div><div class="cb" style="left:247px;top:403.6px"></div><div class="cbl" style="left:254.6px;top:403.6px">Pokaz vario</div><div class="cb" style="left:297px;top:403.6px"></div><div class="cbl" style="left:304.6px;top:403.6px">Wyswietl napiecie</div><div class="cb" style="left:346.6px;top:403.6px"><svg width="6" height="5.3" viewBox="0 0 6 5.3" style="position:absolute;left:-0.5px;top:-0.5px"><path d="M1.2 2.4 L2.5 4.1 L4.8 1" fill="none" stroke="#606060" stroke-width="0.6"/></svg></div><div class="cbl" style="left:354.20000000000005px;top:403.6px">Pokaz temperature</div><div class="cb" style="left:396.4px;top:403.6px"><svg width="6" height="5.3" viewBox="0 0 6 5.3" style="position:absolute;left:-0.5px;top:-0.5px"><path d="M1.2 2.4 L2.5 4.1 L4.8 1" fill="none" stroke="#606060" stroke-width="0.6"/></svg></div><div class="cbl" style="left:404.0px;top:403.6px">Show Throttle In</div><div class="cb" style="left:447px;top:403.6px"><svg width="6" height="5.3" viewBox="0 0 6 5.3" style="position:absolute;left:-0.5px;top:-0.5px"><path d="M1.2 2.4 L2.5 4.1 L4.8 1" fill="none" stroke="#606060" stroke-width="0.6"/></svg></div><div class="cbl" style="left:454.6px;top:403.6px">Show Throttle Out</div><div class="cb" style="left:497px;top:403.6px"></div><div class="cbl" style="left:504.6px;top:403.6px">Pokaz markery</div>
<div class="fb"></div>
<div class="abs" style="left:754.3px;top:403.5px;font-size:11.5px;line-height:14px;font-weight:bold;color:#fff">f</div>
<div class="abs" style="left:765px;top:406.3px;font-size:5.6px;line-height:6px;font-weight:bold;color:#b4c4e0">SHARE</div>
<div class="cb" style="left:709.2px;top:423.3px;border-color:#606060"></div>
<div class="cbl" style="left:718px;top:422.8px">Time axis-only seconds</div>
<div class="task"></div>
<svg class="abs" style="left:0;top:433px" width="800" height="17" viewBox="0 433 800 17">
<rect x="142" y="433" width="21" height="17" fill="#2b4670"/>
<rect x="83.2" y="449" width="16.6" height="1" fill="#8aa4c8"/>
<rect x="124" y="449" width="16.6" height="1" fill="#8aa4c8"/>
<rect x="142" y="449" width="21" height="1" fill="#a8c4e8"/>
<rect x="165" y="449" width="16.2" height="1" fill="#8aa4c8"/>
<g fill="#f4f6fa"><rect x="6.5" y="438.3" width="3.3" height="3"/><rect x="10.3" y="438" width="3.3" height="3.3"/><rect x="6.5" y="441.8" width="3.3" height="2.9"/><rect x="10.3" y="441.8" width="3.3" height="3"/></g>
<circle cx="31" cy="440" r="1.9" fill="none" stroke="#d0d6e0" stroke-width="0.7"/><line x1="29.7" y1="441.4" x2="27.5" y2="444" stroke="#d0d6e0" stroke-width="0.8"/>
<rect x="47.5" y="438.5" width="5.5" height="6" rx="0.8" fill="none" stroke="#e0e4ea" stroke-width="0.8"/><rect x="45.3" y="439.8" width="1.2" height="3.5" fill="#b0b8c4"/><rect x="54" y="439.8" width="1.2" height="3.5" fill="#b0b8c4"/>
<rect x="66.6" y="438.5" width="9.6" height="6.8" fill="#e8e4b8"/><rect x="66.6" y="437.9" width="9.6" height="3.2" fill="#f2d474"/><rect x="69" y="442.5" width="5" height="1.6" fill="#8a9a9a"/>
<rect x="86" y="438" width="6" height="7.3" fill="#2a6cc0"/><rect x="91.5" y="439.5" width="4.8" height="4.5" fill="#e4ecf6"/><circle cx="89" cy="441.6" r="1.3" fill="none" stroke="#e8f0f8" stroke-width="0.7"/>
<circle cx="112" cy="441" r="4.2" fill="#a8acb0"/><path d="M108.5 440 Q112 438 115.5 440 M108.5 442.5 Q112 440.5 115.8 442.5" stroke="#e8eaec" stroke-width="0.9" fill="none"/>
<circle cx="132.7" cy="441.7" r="4.6" fill="#d84a3a"/><path d="M132.7 441.7 L128.4 443.6 A4.6 4.6 0 0 0 135.2 445.6 Z" fill="#3aa050"/><path d="M132.7 441.7 L137 440 A4.6 4.6 0 0 1 135.2 445.6 Z" fill="#f0c030"/><circle cx="132.7" cy="441.7" r="1.8" fill="#4a80d8" stroke="#f0f0f0" stroke-width="0.6"/>
<rect x="147.8" y="437" width="10.2" height="9.5" rx="0.6" fill="#e8f2fa"/><rect x="149" y="438.6" width="7.5" height="2.2" fill="#5a6a80"/><rect x="151.5" y="442.6" width="5" height="2" fill="#5a6a80"/>
<circle cx="173.3" cy="440.6" r="3.6" fill="#f08a3a"/><circle cx="172.6" cy="439.6" r="2.2" fill="#f4d060"/><rect x="172.8" y="444" width="0.9" height="2.5" fill="#d05050"/>
<path d="M681 445 L682.5 440 L684 441 L687 439 M683.5 440.5 L685.5 445" stroke="#c8d0dc" stroke-width="0.9" fill="none"/><circle cx="684.5" cy="438.8" r="1" fill="#c8d0dc"/>
<path d="M696.3 442.3 L698.6 440 L701 442.3" stroke="#d8dee8" stroke-width="0.6" fill="none"/>
<path d="M705 440 L706.5 440 L708.5 438.3 L708.5 444.2 L706.5 442.5 L705 442.5 Z" fill="none" stroke="#d0d8e4" stroke-width="0.6"/><path d="M709.8 439.6 Q711 441.3 709.8 443" stroke="#a0acbc" stroke-width="0.5" fill="none"/>
<circle cx="718.3" cy="441.6" r="3.1" fill="#e8e070"/><path d="M716.8 441.5 L718 442.8 L720.2 440" stroke="#4a6a30" stroke-width="0.7" fill="none"/>
<rect x="727" y="439.2" width="5" height="4.4" fill="none" stroke="#d0d8e4" stroke-width="0.7"/><rect x="725.5" y="440.5" width="1.5" height="3.5" fill="#c0c8d4"/>
<path d="M783 438.5 L790 438.5 L790 443.5 L787.5 443.5 L786.3 445 L785 443.5 L783 443.5 Z" fill="none" stroke="#d8dee8" stroke-width="0.7"/>
<rect x="797" y="433" width="3" height="17" fill="#243250"/>
</svg>
<div class="tray" style="left:737px;top:435.7px">POL</div>
<div class="tray" style="left:737px;top:442.2px">PLP</div>
<div class="tray" style="left:758px;top:435.7px">15:14</div>
<div class="tray" style="left:751px;top:442.2px">2018-04-23</div>
</body></html>
